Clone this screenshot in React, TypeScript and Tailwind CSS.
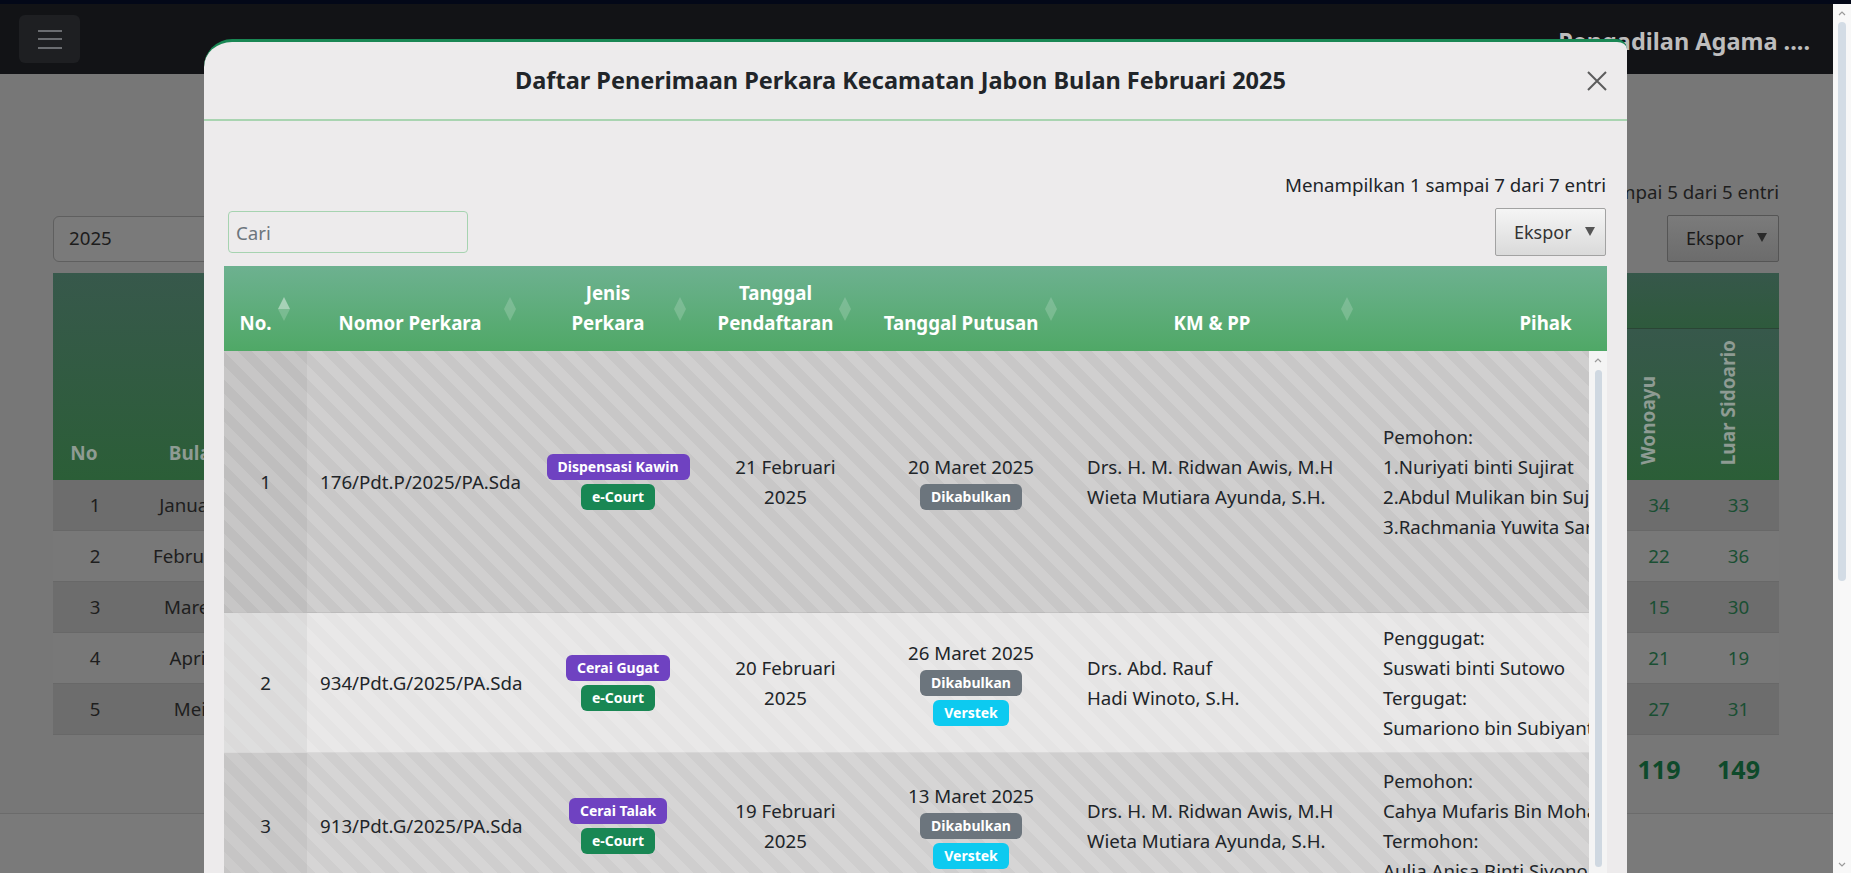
import React from "react";

const stripe =
  "bg-[linear-gradient(45deg,rgba(255,255,255,0.15)_25%,transparent_25%,transparent_50%,rgba(255,255,255,0.15)_50%,rgba(255,255,255,0.15)_75%,transparent_75%,transparent)] bg-[length:28px_28px]";

function Badge({ color, children }: { color: string; children: React.ReactNode }) {
  const cls =
    color === "purple"
      ? "bg-[#6f42c1]"
      : color === "green"
      ? "bg-[#198754]"
      : color === "gray"
      ? "bg-[#6c757d]"
      : "bg-[#0dcaf0]";
  return (
    <span
      className={`${cls} inline-flex h-[26px] items-center rounded-[6px] px-[11px] text-[14px] font-bold leading-none text-white whitespace-nowrap`}
    >
      {children}
    </span>
  );
}

function Line({ children, center }: { children: React.ReactNode; center?: boolean }) {
  return (
    <div
      className={
        center
          ? "h-[30px] flex items-center justify-center whitespace-nowrap"
          : "h-[30px] flex items-center whitespace-nowrap"
      }
    >
      {children}
    </div>
  );
}

function SortIcon({ active }: { active?: boolean }) {
  return (
    <svg
      width="12"
      height="24"
      viewBox="0 0 12 24"
      className="absolute right-[17px] top-1/2 -translate-y-1/2"
    >
      <path d="M6 0 L12 12 L0 12 Z" fill="#ffffff" fillOpacity={active ? 0.45 : 0.18} />
      <path d="M6 24 L12 12 L0 12 Z" fill="#ffffff" fillOpacity={0.18} />
    </svg>
  );
}

function Chevron({ down }: { down?: boolean }) {
  return (
    <svg width="8" height="5" viewBox="0 0 8 5">
      <path
        d={down ? "M1 1 L4 4 L7 1" : "M1 4 L4 1 L7 4"}
        stroke="#9a9a9a"
        strokeWidth="1.2"
        fill="none"
      />
    </svg>
  );
}

const heads = [
  { l1: "", l2: "No.", icon: true, active: true },
  { l1: "", l2: "Nomor Perkara", icon: true },
  { l1: "Jenis", l2: "Perkara", icon: true },
  { l1: "Tanggal", l2: "Pendaftaran", icon: true },
  { l1: "", l2: "Tanggal Putusan", icon: true },
  { l1: "", l2: "KM & PP", icon: true },
  { l1: "", l2: "Pihak", icon: false },
];

type RowData = {
  h: string;
  bg: string;
  no: string;
  nomor: string;
  jenis: string;
  daftar: string;
  putusan: string;
  verstek: boolean;
  km: string[];
  pihak: string[];
};

const rows: RowData[] = [
  {
    h: "h-[262px]",
    bg: "bg-[#c8c7c7]",
    no: "1",
    nomor: "176/Pdt.P/2025/PA.Sda",
    jenis: "Dispensasi Kawin",
    daftar: "21 Februari",
    putusan: "20 Maret 2025",
    verstek: false,
    km: ["Drs. H. M. Ridwan Awis, M.H", "Wieta Mutiara Ayunda, S.H."],
    pihak: ["Pemohon:", "1.Nuriyati binti Sujirat", "2.Abdul Mulikan bin Sujirat", "3.Rachmania Yuwita Sari"],
  },
  {
    h: "h-[140px]",
    bg: "bg-[#e5e4e4]",
    no: "2",
    nomor: "934/Pdt.G/2025/PA.Sda",
    jenis: "Cerai Gugat",
    daftar: "20 Februari",
    putusan: "26 Maret 2025",
    verstek: true,
    km: ["Drs. Abd. Rauf", "Hadi Winoto, S.H."],
    pihak: ["Penggugat:", "Suswati binti Sutowo", "Tergugat:", "Sumariono bin Subiyanto"],
  },
  {
    h: "h-[146px]",
    bg: "bg-[#cfcece]",
    no: "3",
    nomor: "913/Pdt.G/2025/PA.Sda",
    jenis: "Cerai Talak",
    daftar: "19 Februari",
    putusan: "13 Maret 2025",
    verstek: true,
    km: ["Drs. H. M. Ridwan Awis, M.H", "Wieta Mutiara Ayunda, S.H."],
    pihak: ["Pemohon:", "Cahya Mufaris Bin Mohammad", "Termohon:", "Aulia Anisa Binti Siyono"],
  },
];

const bgRows = [
  { no: "1", m: "Januari", a: "34", b: "33" },
  { no: "2", m: "Februari", a: "22", b: "36" },
  { no: "3", m: "Maret", a: "15", b: "30" },
  { no: "4", m: "April", a: "21", b: "19" },
  { no: "5", m: "Mei", a: "27", b: "31" },
];

function Modal() {
  return (
    <div className="absolute left-[204px] top-[39px] w-[1423px] h-[860px] bg-[#edebec] border-t-[3px] border-[#198754] rounded-tl-[28px] rounded-tr-[10px] overflow-hidden flex flex-col">
      {/* header */}
      <div className="h-[79px] shrink-0 flex items-center pl-[20px] pr-[20px] border-b-2 border-[#a9d4b1]">
        <div className="flex-1 mr-[10px] text-center text-[23.5px] font-bold text-[#212529]">
          Daftar Penerimaan Perkara Kecamatan Jabon Bulan Februari 2025
        </div>
        <svg width="20" height="20" viewBox="0 0 20 20">
          <path d="M1 1 L19 19 M19 1 L1 19" stroke="#5c5c5c" strokeWidth="2" />
        </svg>
      </div>
      {/* body */}
      <div className="pl-[20px] pr-[20px] pt-[50px] flex flex-col text-[18.7px] text-[#212529]">
        <div className="h-[28px] leading-[28px] text-right pr-[1px]">
          Menampilkan 1 sampai 7 dari 7 entri
        </div>
        <div className="mt-[9px] h-[48px] flex items-center justify-between">
          <input
            placeholder="Cari"
            className="ml-[4px] w-[240px] h-[42px] rounded-[4px] border border-[#a6d3b0] bg-transparent pl-[7px] text-[18.7px] outline-none placeholder:text-[#6c757d]"
          />
          <div className="mr-[1px] w-[111px] h-[48px] rounded-[2px] border border-[#a2a2a2] bg-linear-to-b from-[#f5f5f5] to-[#dadada] flex items-center pl-[18px] text-[18px] text-[#333333]">
            <span>Ekspor</span>
            <svg width="10" height="9" viewBox="0 0 10 9" className="ml-[13px] mb-[2px]">
              <path d="M0 0 L10 0 L5 9 Z" fill="#555555" />
            </svg>
          </div>
        </div>
        <div className="mt-[10px]">
          {/* table head */}
          <div className="h-[85px] overflow-hidden bg-linear-to-b from-[#6db190] to-[#4fa866]">
            <div className="grid grid-cols-[83px_226px_170px_165px_206px_296px_371px] w-[1517px] h-full">
              {heads.map((h, i) => (
                <div
                  key={i}
                  className="relative flex flex-col justify-end items-center pl-[10px] pr-[30px] pb-[13px] leading-[30px] text-center whitespace-nowrap font-bold text-white"
                >
                  {h.l1 ? <div>{h.l1}</div> : null}
                  <div>{h.l2}</div>
                  {h.icon ? <SortIcon active={h.active} /> : null}
                </div>
              ))}
            </div>
          </div>
          {/* table body */}
          <div className="flex">
            <div className="w-[1365px] overflow-hidden">
              <div className="w-[1517px]">
                {rows.map((r, i) => (
                  <div
                    key={i}
                    className={`${r.h} ${r.bg} ${stripe} grid grid-cols-[83px_226px_170px_165px_206px_296px_371px] border-b border-black/[0.06] leading-[30px]`}
                  >
                    <div className="bg-black/[0.045] flex items-center justify-center">{r.no}</div>
                    <div className="flex items-center pl-[13px] whitespace-nowrap">{r.nomor}</div>
                    <div className="flex flex-col justify-center">
                      <Line center>
                        <Badge color="purple">{r.jenis}</Badge>
                      </Line>
                      <Line center>
                        <Badge color="green">e-Court</Badge>
                      </Line>
                    </div>
                    <div className="flex flex-col justify-center">
                      <Line center>{r.daftar}</Line>
                      <Line center>2025</Line>
                    </div>
                    <div className="flex flex-col justify-center">
                      <Line center>{r.putusan}</Line>
                      <Line center>
                        <Badge color="gray">Dikabulkan</Badge>
                      </Line>
                      {r.verstek ? (
                        <Line center>
                          <Badge color="cyan">Verstek</Badge>
                        </Line>
                      ) : null}
                    </div>
                    <div className="flex flex-col justify-center pl-[13px]">
                      {r.km.map((k, j) => (
                        <Line key={j}>{k}</Line>
                      ))}
                    </div>
                    <div className="flex flex-col justify-center pl-[13px]">
                      {r.pihak.map((k, j) => (
                        <Line key={j}>{k}</Line>
                      ))}
                    </div>
                  </div>
                ))}
              </div>
            </div>
            <div className="w-[18px] bg-[#f4f4f4] flex flex-col items-center">
              <div className="mt-[7px] h-[5px] flex">
                <Chevron />
              </div>
              <div className="mt-[7px] w-[7px] h-[497px] rounded-full bg-[#cfd8e1]" />
            </div>
          </div>
        </div>
      </div>
    </div>
  );
}

export default function App() {
  return (
    <div className="relative w-[1851px] h-[873px] overflow-hidden font-['Noto_Sans',sans-serif] bg-[#777777]">
      <div className="h-[4px] bg-[#030818]" />
      <div className="flex h-[869px]">
        <div className="w-[1833px] flex flex-col">
          {/* navbar */}
          <nav className="h-[70px] shrink-0 bg-[#121316] flex items-center justify-between pl-[19px] pr-[23px]">
            <div className="w-[61px] h-[48px] rounded-[6px] bg-[#1e1f22] flex flex-col items-center justify-center gap-[6.5px]">
              <div className="w-[24px] h-[2px] bg-[#6b6d71]" />
              <div className="w-[24px] h-[2px] bg-[#6b6d71]" />
              <div className="w-[24px] h-[2px] bg-[#6b6d71]" />
            </div>
            <div className="mt-[6px] text-[23.5px] font-bold text-[#bdbdbd]">Pengadilan Agama ....</div>
          </nav>
          {/* page */}
          <main className="flex-1 flex flex-col pl-[53px] pr-[54px] pt-[104px] text-[18.7px] text-[#1e1e1e]">
            <div className="h-[28px] leading-[28px] text-right">Menampilkan 1 sampai 5 dari 5 entri</div>
            <div className="mt-[9px] h-[47px] flex items-center justify-between">
              <div className="w-[300px] h-[46px] rounded-[6px] border border-[#5f5f5f] bg-[#7a7a7a] flex items-center pl-[15px] text-[#1c1c1c]">
                2025
              </div>
              <div className="w-[112px] h-[47px] rounded-[2px] border border-[#555555] bg-linear-to-b from-[#7b7b7b] to-[#6c6c6c] flex items-center pl-[18px] text-[18px] text-[#1a1a1a]">
                <span>Ekspor</span>
                <svg width="10" height="9" viewBox="0 0 10 9" className="ml-[13px] mb-[2px]">
                  <path d="M0 0 L10 0 L5 9 Z" fill="#2a2a2a" />
                </svg>
              </div>
            </div>
            <div className="mt-[11px]">
              <div className="grid grid-cols-[84px_118px_1fr_78px_81px] grid-rows-[56px_151px] font-bold text-[19px] text-[#8e9b93] leading-[30px]">
                <div className="row-span-2 bg-linear-to-b from-[#37584b] to-[#2b5e37] flex items-end justify-center pr-[22px] pb-[12px]">
                  No
                </div>
                <div className="row-span-2 bg-linear-to-b from-[#37584b] to-[#2b5e37] flex items-end justify-center pb-[12px]">
                  Bulan
                </div>
                <div className="row-span-2 bg-linear-to-b from-[#37584b] to-[#2b5e37]" />
                <div className="col-span-2 bg-linear-to-b from-[#36574a] to-[#2e5a3c] border-b border-[#2a4535]" />
                <div className="bg-linear-to-b from-[#37584b] to-[#2b5e37] flex items-end justify-center pr-[22px] pb-[15px]">
                  <span className="[writing-mode:vertical-rl] rotate-180">Wonoayu</span>
                </div>
                <div className="bg-linear-to-b from-[#37584b] to-[#2b5e37] flex items-end justify-center pr-[22px] pb-[15px]">
                  <span className="[writing-mode:vertical-rl] rotate-180">Luar Sidoario</span>
                </div>
              </div>
              {bgRows.map((r, i) => (
                <div
                  key={i}
                  className={`grid grid-cols-[84px_118px_1fr_78px_81px] h-[51px] items-center border-b border-[#686868] ${
                    i % 2 === 0 ? "bg-[#6d6d6d]" : "bg-[#787878]"
                  }`}
                >
                  <div className="text-center">{r.no}</div>
                  <div className="text-center pr-[12px] whitespace-nowrap">{r.m}</div>
                  <div />
                  <div className="text-center text-[#1a4f33]">{r.a}</div>
                  <div className="text-center text-[#1a4f33]">{r.b}</div>
                </div>
              ))}
              <div className="grid grid-cols-[84px_118px_1fr_78px_81px] h-[70px] items-center text-[25px] font-bold text-[#0e4a2b]">
                <div />
                <div />
                <div />
                <div className="text-center">119</div>
                <div className="text-center">149</div>
              </div>
            </div>
            <div className="mt-[8px] flex-1 -ml-[53px] -mr-[54px] border-t border-[#6b6b6b] bg-[#7a7a7a]" />
          </main>
        </div>
        {/* page scrollbar */}
        <div className="w-[18px] bg-[#f8f8f8] flex flex-col items-center">
          <div className="mt-[7px] h-[5px] flex">
            <Chevron />
          </div>
          <div className="mt-[6px] w-[8px] h-[559px] rounded-full bg-[#d3dce5]" />
          <div className="flex-1" />
          <div className="mb-[6px] h-[5px] flex">
            <Chevron down />
          </div>
        </div>
      </div>
      <Modal />
    </div>
  );
}
